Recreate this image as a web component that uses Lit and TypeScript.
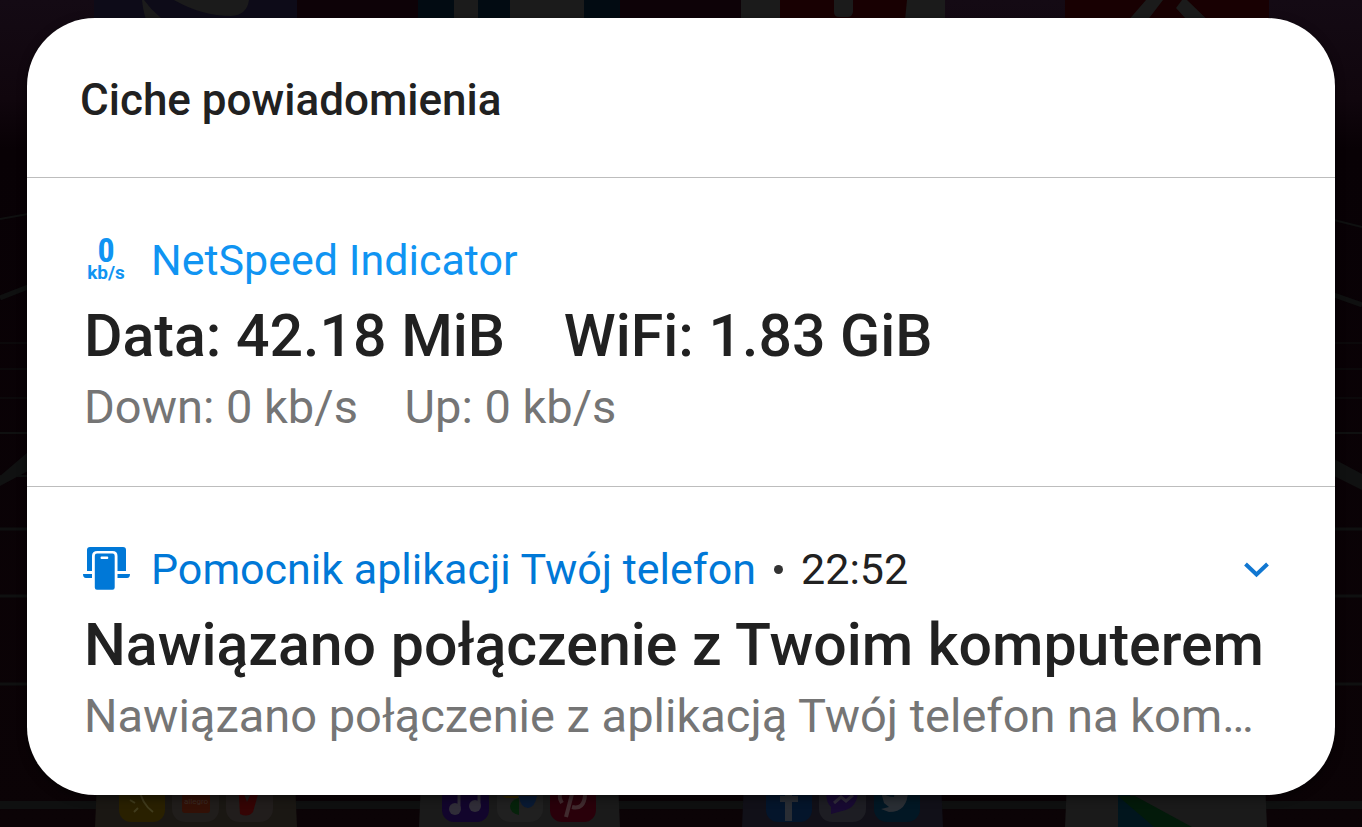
import { LitElement, html, css, svg } from "lit";
import { customElement, property } from "lit/decorators.js";

@customElement("home-backdrop")
class HomeBackdrop extends LitElement {
  static styles = css`
    :host { display: block; }
    .scene { display: block; width: 100%; height: 100%; }
    .tiny { font-family: Roboto, sans-serif; font-size: 8px; fill: #3a2a24; }
  `;

  private track() {
    return svg`
      <g stroke="#0f1010" fill="none">
        <path stroke-width="2" d="M0 219 28 214M1334 220 1362 227"/>
        <path stroke-width="5" d="M0 298 28 287M1334 295 1362 305"/>
        <path stroke-width="1" d="M0 343H28M0 369H28M0 398H28M1334 343H1362M1334 369H1362M1334 398H1362"/>
        <path stroke-width="2" d="M0 433H28M0 476H28M1334 433H1362"/>
        <path stroke-width="3" d="M0 529H1362M0 596H1362M0 684H1362"/>
        <path stroke-width="8" d="M0 805H1362"/>
      </g>
      <path fill="#101111" d="M0 476 28 452V471L0 486ZM1334 459 1362 474V490L1334 476Z"/>`;
  }

  private topRow() {
    return svg`
      <path fill="#0d0b18" d="M94 0H297V40H94Z"/>
      <path fill="#1b1b1b" d="M142 0Q143 14 150 30H182Q158 20 144 0ZM174 0Q202 16 231 16 247 15 249 0Z"/>
      <path fill="#020b12" d="M418 0H620V40H418Z"/>
      <path fill="#1b1b1b" d="M454 0H478V40H454ZM510 0H584V40H510ZM741 0H945V40H741Z"/>
      <path fill="#180002" d="M780 0H907L903 40H780ZM1065 0H1269V40H1065Z"/>
      <path fill="#1b1b1b" d="M834 0H853V12Q852 17 848 17H839Q834 17 834 12ZM1146 0H1163L1140 30H1120ZM1176 8 1182 0H1187L1218 30H1196Z"/>`;
  }

  private bottomRow() {
    return svg`
      <path fill="#1a1713" d="M97 780H295L297 827H95Z"/>
      <path fill="#1a1a1a" d="M421 780H618L620 827H419ZM1067 780H1265L1267 827H1065Z"/>
      <path fill="#111018" d="M744 780H941L943 827H742Z"/>
      <rect x="119" y="776" width="46" height="46" rx="12" fill="#292000"/>
      <path d="M139 787Q141 803 153 812M130 800l5 3M134 812l4-4" stroke="#403b1c" stroke-width="2" fill="none"/>
      <rect x="172" y="776" width="47" height="46" rx="13" fill="#201d1b"/>
      <rect x="182" y="784" width="28" height="29" rx="3" fill="#321006"/>
      <text class="tiny" x="184" y="804">allegro</text>
      <rect x="226" y="776" width="47" height="46" rx="13" fill="#211d1c"/>
      <path fill="#350404" d="M238 780H262L253 812Q248 818 240 814Z"/>
      <path fill="#211d1c" d="M244 794 252 780H257L247 802Z"/>
      <rect x="442" y="776" width="47" height="46" rx="12" fill="#12052c"/>
      <path d="M459 789V808M479 789V806" stroke="#302d38" stroke-width="3"/>
      <g fill="#302d38"><circle cx="455" cy="809" r="6"/><circle cx="475" cy="806" r="6"/></g>
      <rect x="497" y="776" width="46" height="46" rx="13" fill="#202020"/>
      <path fill="#302600" d="M502 796H518V798H506Z"/>
      <path fill="#06220b" d="M519 798V815Q510 813 510 806 511 800 519 798Z"/>
      <path fill="#091a33" d="M519 796H537Q535 807 528 808 520 807 519 796Z"/>
      <rect x="550" y="776" width="46" height="46" rx="12" fill="#29000a"/>
      <path d="M572 794L566 817M562 803Q556 793 566 789M572 807Q584 810 585 795" stroke="#402a2e" stroke-width="4" fill="none"/>
      <rect x="766" y="776" width="46" height="46" rx="12" fill="#04152b"/>
      <path fill="#292d34" d="M785 789H792V796H798V802H792V821H785V802H780V796H785Z"/>
      <rect x="819" y="776" width="47" height="46" rx="13" fill="#1d1d23"/>
      <path fill="#180a32" d="M826 790H858Q858 808 842 811L831 814V807Q826 803 826 790Z"/>
      <path d="M834 803 841 797 846 801 853 795" stroke="#302c3a" stroke-width="3" fill="none"/>
      <rect x="874" y="776" width="46" height="46" rx="13" fill="#021724"/>
      <path fill="#292e34" d="M881 792Q887 797 894 797L895 790H908Q908 812 889 812L881 809 889 807 884 803Z"/>
      <path fill="#01151d" d="M1118 790V827H1154L1126 790Z"/>
      <path fill="#031a0a" d="M1118 796 1154 827H1192L1135 796Z"/>`;
  }

  render() {
    return html`
      <svg class="scene" viewBox="0 0 1362 827" preserveAspectRatio="none" aria-hidden="true">
        <defs>
          <linearGradient id="sky" x2="0" y2="1">
            <stop offset="0" stop-color="#140a14"/>
            <stop offset=".12" stop-color="#10060d"/>
            <stop offset=".18" stop-color="#080105"/>
            <stop offset="1" stop-color="#0b0306"/>
          </linearGradient>
        </defs>
        <path fill="url(#sky)" d="M0 0H1362V827H0Z"/>
        <path fill="#0d0207" d="M297 0H741V40H297Z"/>
        ${this.track()}${this.topRow()}${this.bottomRow()}
      </svg>`;
  }
}

@customElement("notification-item")
class NotificationItem extends LitElement {
  static styles = css`
    :host { display: block; border-top: 1px solid #bdbdbd; }
    .item { padding: 52px 57px 49px; }
    .head { display: flex; align-items: center; height: 60px; font-size: 43px; line-height: 60px; }
    .icon { flex: none; width: 48px; height: 48px; margin: 0 20px 0 -1px; overflow: visible; }
    .speed { color: #1094f2; }
    .phone { color: #0078d7; }
    .num { font-family: "Roboto Condensed", Roboto, sans-serif; font-weight: 700; font-size: 34px; }
    .unit { font-weight: 700; font-size: 19px; }
    .time { color: #212121; }
    .dot { flex: none; width: 9px; height: 9px; margin: 0 18px; border-radius: 50%; background: #333; }
    .more { display: block; margin-left: auto; padding: 0; width: 44px; height: 44px; border: 0; background: none; color: #1177d1; }
    .more svg { display: block; width: 44px; height: 44px; }
    .title { margin: 10px 0 0; font-size: 59px; line-height: 72px; font-weight: 500; color: #212121; white-space: pre; }
    .body { margin: 5px 0 0; font-size: 47px; line-height: 60px; color: #757575; white-space: pre; overflow: hidden; text-overflow: ellipsis; }
  `;

  @property() kind = "speed";
  @property() app = "";
  @property() time = "";
  @property() heading = "";
  @property() text = "";

  private icon() {
    return this.kind === "speed"
      ? html`<svg class="icon speed" viewBox="0 0 48 48" fill="currentColor">
          <text class="num" x="23" y="26" text-anchor="middle">0</text>
          <text class="unit" x="23" y="43" text-anchor="middle">kb/s</text>
        </svg>`
      : html`<svg class="icon phone" viewBox="0 0 48 48" fill="currentColor" aria-hidden="true">
          <path d="M7 2H40Q43 2 43 5V26H34.500V11Q34.500 6 29.500 6H14.500Q9 6 9 11V26H4V5Q4 2 7 2Z"/>
          <path d="M0 29H9V33H3Q0 33 0 29ZM34.500 29H47Q47 33 44 33H34.500Z"/>
          <path fill-rule="evenodd" d="M14 8.500H29.500Q31.700 8.500 31.700 10.700V42.500Q31.700 44.700 29.500 44.700H14Q11.800 44.700 11.800 42.500V10.700Q11.800 8.500 14 8.500ZM18.500 11.500Q17.500 11.500 17.500 12.700T18.500 13.900H24.300Q25.300 13.900 25.300 12.700T24.300 11.500Z"/>
        </svg>`;
  }

  render() {
    return html`
      <article class="item">
        <header class="head">
          ${this.icon()}
          <span class=${this.kind}>${this.app}</span>
          ${this.time
            ? html`<span class="dot"></span><time class="time">${this.time}</time>
                <button class="more" aria-label="Rozwiń">
                  <svg viewBox="0 0 44 44" fill="none" stroke="currentColor" stroke-width="4"><path d="M11.500 17 22.500 27.500 33.500 17"/></svg>
                </button>`
            : ""}
        </header>
        <h3 class="title">${this.heading}</h3>
        <p class="body">${this.text}</p>
      </article>`;
  }
}

@customElement("app-root")
class AppRoot extends LitElement {
  static styles = css`
    :host { display: block; position: relative; min-height: 100vh; overflow: hidden; box-sizing: border-box; padding: 18px 27px 31px; background: #0b0306; font-family: Roboto, sans-serif; }
    .backdrop { position: absolute; inset: 0; }
    .card { position: relative; border-radius: 68px; background: #fff; overflow: hidden; box-shadow: 0 3px 10px rgba(0, 0, 0, .5); }
    .top { margin: 0; padding: 52px 53px 47px; font-size: 44px; line-height: 60px; font-weight: 500; color: #212121; }
  `;

  render() {
    return html`
      <home-backdrop class="backdrop"></home-backdrop>
      <main class="card">
        <h2 class="top">Ciche powiadomienia</h2>
        <notification-item kind="speed" app="NetSpeed Indicator"
          .heading=${"Data: 42.18 MiB    WiFi: 1.83 GiB"}
          .text=${"Down: 0 kb/s    Up: 0 kb/s"}></notification-item>
        <notification-item kind="phone" app="Pomocnik aplikacji Twój telefon" time="22:52"
          .heading=${"Nawiązano połączenie z Twoim komputerem"}
          .text=${"Nawiązano połączenie z aplikacją Twój telefon na komputerze"}></notification-item>
      </main>`;
  }
}
